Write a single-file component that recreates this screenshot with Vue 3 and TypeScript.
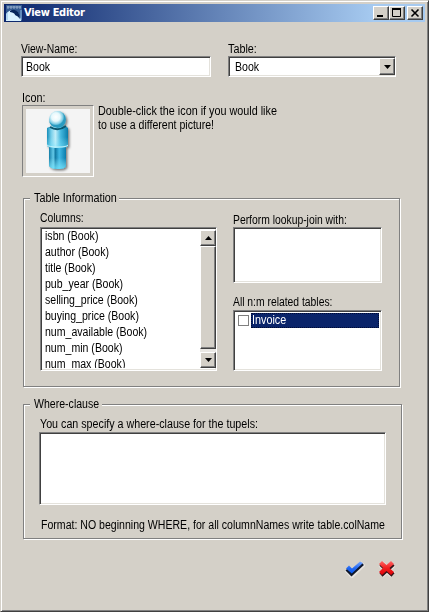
<script setup lang="ts">
import { ref } from 'vue'

const viewName = ref('Book')
const table = ref('Book')
const columns: string[] = [
  'isbn (Book)',
  'author (Book)',
  'title (Book)',
  'pub_year (Book)',
  'selling_price (Book)',
  'buying_price (Book)',
  'num_available (Book)',
  'num_min (Book)',
  'num_max (Book)',
]
</script>

<template>
  <main class="window">
    <header class="titlebar">
      <svg class="app-icon" viewBox="0 0 16 16">
        <rect width="16" height="16" fill="#345b91" />
        <path d="M1 2h14M2 1v3M5 1v3M8 1v3M11 1v3M14 1v3" stroke="#aabed8" stroke-width=".8" />
        <path d="M0 9Q3 5 7 5q5 0 6 6l2 3v2H0z" fill="#d9f2ff" />
        <path d="M4 6Q8 3 12 7q2 3 2 7-2-3-5-4 0-2-5-3z" fill="#07265b" />
        <path d="M1 15V8M15 15V5" stroke="#8bbbe4" />
      </svg>
      <h1>View Editor</h1>
      <div class="controls">
        <button class="raised"><svg viewBox="0 0 12 10"><path d="M2 8h6" stroke="#000" stroke-width="2" /></svg></button>
        <button class="raised"><svg viewBox="0 0 12 10"><path d="M1.5 1.5h8v7h-8z" fill="none" stroke="#000" /><path d="M1 1h9" stroke="#000" stroke-width="2" /></svg></button>
        <button class="raised close"><svg viewBox="0 0 12 10"><path d="m2.5 1.5 7 7m0-7-7 7" stroke="#000" stroke-width="1.6" /></svg></button>
      </div>
    </header>

    <section class="fields">
      <div class="field name-field">
        <label><span class="t-name">View-Name:</span></label>
        <div class="sunken input"><span>{{ viewName }}</span></div>
      </div>
      <div class="field table-field">
        <label><span class="t-wide">Table:</span></label>
        <div class="sunken combo">
          <span>{{ table }}</span>
          <button class="raised drop"><svg viewBox="0 0 7 4"><path d="M0 0h7L3.5 4z" /></svg></button>
        </div>
      </div>
    </section>

    <section class="icon-row">
      <div>
        <label><span class="t-wide">Icon:</span></label>
        <div class="picture">
          <svg viewBox="0 0 64 64">
            <defs>
              <linearGradient id="body"><stop stop-color="#168db9" /><stop offset=".2" stop-color="#78cfea" /><stop offset=".4" stop-color="#c1edf8" /><stop offset=".65" stop-color="#45b8df" /><stop offset="1" stop-color="#087caa" /></linearGradient>
              <linearGradient id="legs"><stop stop-color="#147da6" /><stop offset=".25" stop-color="#64c9e8" /><stop offset=".38" stop-color="#137ba4" /><stop offset=".6" stop-color="#40b9e5" /><stop offset="1" stop-color="#087cac" /></linearGradient>
              <linearGradient id="shine" x2="0" y2="1"><stop offset=".5" stop-color="#a4f2ff" stop-opacity="0" /><stop offset="1" stop-color="#72e5ff" stop-opacity=".8" /></linearGradient>
              <radialGradient id="head" cx=".4" cy=".35"><stop stop-color="#fff" /><stop offset=".5" stop-color="#e6f8fc" /><stop offset=".85" stop-color="#7ccbe3" /><stop offset="1" stop-color="#2b9bc0" /></radialGradient>
              <filter id="shadow" x="-30%" width="170%" height="130%"><feDropShadow dx="1.5" dy="1.5" stdDeviation="1" flood-opacity=".5" /></filter>
            </defs>
            <g filter="url(#shadow)">
              <path d="M23 38h17v19q-1 3-8 3t-9-3z" fill="url(#legs)" />
              <path d="M23 38h17v19q-1 3-8 3t-9-3z" fill="url(#shine)" />
              <path d="M21 19q2-2 11-2t10 2v18q-2 2-10 2t-11-2z" fill="url(#body)" />
              <path d="M21 19q2-2 11-2t10 2v18q-2 2-10 2t-11-2z" fill="url(#shine)" opacity=".6" />
              <path d="M21 36q2 2 11 2t10-2" fill="none" stroke="#c2f1fa" />
              <path d="M24 18q8 5 16-1" fill="none" stroke="#07556d" stroke-width="2" />
              <circle cx="31.5" cy="10.5" r="8.5" fill="url(#head)" />
            </g>
          </svg>
        </div>
      </div>
      <p><span class="t-wide">Double-click the icon if you would like</span><br><span>to use a different picture!</span></p>
    </section>

    <section class="group info">
      <h2><span class="t-wide">Table Information</span></h2>
      <div class="left">
        <label><span class="t-slim">Columns:</span></label>
        <div class="sunken listbox">
          <ul><li v-for="c in columns" :key="c"><span>{{ c }}</span></li></ul>
          <div class="scroll">
            <div class="raised arrow"><svg viewBox="0 0 7 4"><path d="M0 4h7L3.5 0z" /></svg></div>
            <div class="raised thumb"></div>
            <div class="track"></div>
            <div class="raised arrow"><svg viewBox="0 0 7 4"><path d="M0 0h7L3.5 4z" /></svg></div>
          </div>
        </div>
      </div>
      <div class="right">
        <label><span class="t-slim">Perform lookup-join with:</span></label>
        <div class="sunken lookup"></div>
        <label class="related-label"><span class="t-slim">All n:m related tables:</span></label>
        <div class="sunken related">
          <div class="check-row"><i></i><div class="selected"><span class="t-wide">Invoice</span></div></div>
        </div>
      </div>
    </section>

    <section class="group where">
      <h2><span>Where-clause</span></h2>
      <label><span class="t-clause">You can specify a where-clause for the tupels:</span></label>
      <div class="sunken clause"></div>
      <p><span>Format: NO beginning WHERE, for all columnNames write table.colName</span></p>
    </section>

    <footer>
      <svg viewBox="0 0 20 18">
        <defs><linearGradient id="blue" x2="0" y2="1"><stop stop-color="#73a5ff" /><stop offset=".55" stop-color="#2367f1" /><stop offset="1" stop-color="#0758ef" /></linearGradient></defs>
        <path d="m1.5 9 5.5 6L18.5 3.500" fill="none" stroke="#e8e5e0" stroke-width="5.500" />
        <path d="m1.500 9.500 5 5L18 4" fill="none" stroke="#10182c" stroke-width="2.800" />
        <path d="m1 8.500 3-3L7 8.500 15 1.500l3 1.500L6.800 13.500z" fill="url(#blue)" />
      </svg>
      <svg viewBox="0 0 20 18">
        <defs><linearGradient id="red" x2="0" y2="1"><stop stop-color="#ff6666" /><stop offset=".5" stop-color="#ef2020" /><stop offset="1" stop-color="#e20008" /></linearGradient></defs>
        <path d="m4 4 12 11m0-11L4 15" stroke="#e7e4df" stroke-width="7" />
        <path d="m4 4 12 11m0-11L4 15" stroke="#321419" stroke-width="4.6" />
        <path d="m2 4 3-3 4.500 4L14 1l3 3-4.500 4 4.500 4-3 3-4.500-4L5 15l-3-3 4-4z" fill="url(#red)" />
      </svg>
    </footer>
  </main>
</template>

<style>
body { margin: 0; }
</style>
<style scoped>
* { box-sizing: border-box; }
.window { width: 429px; height: 612px; padding: 2px; display: flex; flex-direction: column; background: #d4d0c8; color: #000; border: 1px solid; border-color: #d4d0c8 #404040 #404040 #d4d0c8; box-shadow: inset 1px 1px #fff, inset -1px -1px #808080; font: 12px/14px "Liberation Sans", Arial, sans-serif; overflow: hidden; }
h1, h2, p, ul { margin: 0; padding: 0; font-weight: normal; }
button { padding: 0; font: inherit; }
label { display: block; height: 14px; white-space: nowrap; }
/* Condensed dialog lettering */
span { display: inline-block; white-space: nowrap; transform: scaleX(.88); transform-origin: 0 50%; }
.t-wide { transform: scaleX(.9); }
.t-slim { transform: scaleX(.862); }
.t-name { transform: scaleX(.865); }
.t-clause { transform: scaleX(.892); }
.titlebar { margin: 1px 1px 0; height: 18px; flex: none; display: flex; align-items: center; background: linear-gradient(90deg, #0a246a, #a6caf0 88%); padding: 0 2px; }
.app-icon { width: 16px; height: 16px; }
h1 { margin-left: 2px; font: bold 11px/16px "DejaVu Sans Condensed", "DejaVu Sans", sans-serif; color: #fff; flex: 1; letter-spacing: -.3px; }
.controls { display: flex; }
.controls button { width: 16px; height: 14px; display: flex; justify-content: center; align-items: center; }
.controls svg { width: 12px; height: 10px; }
.controls .close { margin-left: 2px; }
.raised { background: #d4d0c8; border: 1px solid; border-color: #fff #404040 #404040 #fff; box-shadow: inset -1px -1px #808080; }
.sunken { background: #fff; border: 1px solid; border-color: #808080 #fff #fff #808080; box-shadow: inset 1px 1px #404040, inset -1px -1px #e4e2dc; padding: 2px; }
.fields { display: flex; gap: 17px; margin: 20px 0 0 18px; }
.name-field { width: 190px; }
.table-field { width: 168px; }
.input, .combo { height: 21px; display: flex; align-items: center; }
.input { padding: 0 4px; }
.combo { padding: 1px 0 1px 6px; justify-content: space-between; }
.drop { width: 16px; height: 17px; }
.drop, .arrow { display: flex; align-items: center; justify-content: center; }
.drop svg, .arrow svg { width: 7px; height: 4px; }
.icon-row { display: flex; margin: 14px 0 0 19px; gap: 4px; }
.icon-row > p { padding-top: 13px; }
.picture { width: 72px; height: 72px; padding: 3px; border: 1px solid; border-color: #808080 #fff #fff #808080; }
.picture svg { display: block; width: 64px; height: 64px; background: #f4f4f4; }
.group { border: 1px solid #808080; box-shadow: 1px 1px #fff, inset 1px 1px #fff; }
.group h2 { height: 14px; margin: -8px 0 0 6px; padding-left: 4px; background: #d4d0c8; font-size: 12px; line-height: 14px; }
.info { width: 377px; height: 189px; margin: 21px 0 0 20px; display: grid; grid-template: 6px 1fr / 177px 149px; column-gap: 16px; padding-left: 16px; }
.info h2 { grid-column: 1 / 3; width: 89px; margin-left: -10px; }
.left { padding-top: 6px; }
.left label { height: 16px; }
.listbox { width: 177px; height: 144px; display: flex; padding-right: 0; }
.listbox ul { flex: 1; padding-left: 2px; overflow: hidden; list-style: none; }
li { height: 16px; line-height: 13px; }
.scroll { width: 16px; display: flex; flex-direction: column; }
.arrow { width: 16px; height: 16px; }
.thumb { flex: 1; }
.track { height: 3px; background: #eae8e4; }
.right { padding-top: 8px; }
.lookup { height: 56px; }
.related-label { margin-top: 12px; height: 15px; }
.related { height: 61px; }
.check-row { display: flex; height: 15px; padding-left: 2px; gap: 2px; align-items: center; }
.check-row i { width: 11px; height: 11px; border: 1px solid #808080; }
.selected { flex: 1; height: 15px; line-height: 15px; background: #0a246a; color: #fff; outline: 1px dotted #000b32; outline-offset: -1px; padding-left: 1px; }
.where { width: 379px; height: 135px; margin: 17px 0 0 20px; padding-left: 15px; }
.where h2 { width: 72px; margin-left: -9px; }
.where label { height: 15px; margin-top: 6px; padding-left: 1px; }
.clause { width: 347px; height: 73px; }
.where p { margin: 13px 0 0 2px; }
footer { display: flex; gap: 12px; margin: 21px 0 0 342px; }
footer svg { width: 20px; height: 18px; }
</style>
